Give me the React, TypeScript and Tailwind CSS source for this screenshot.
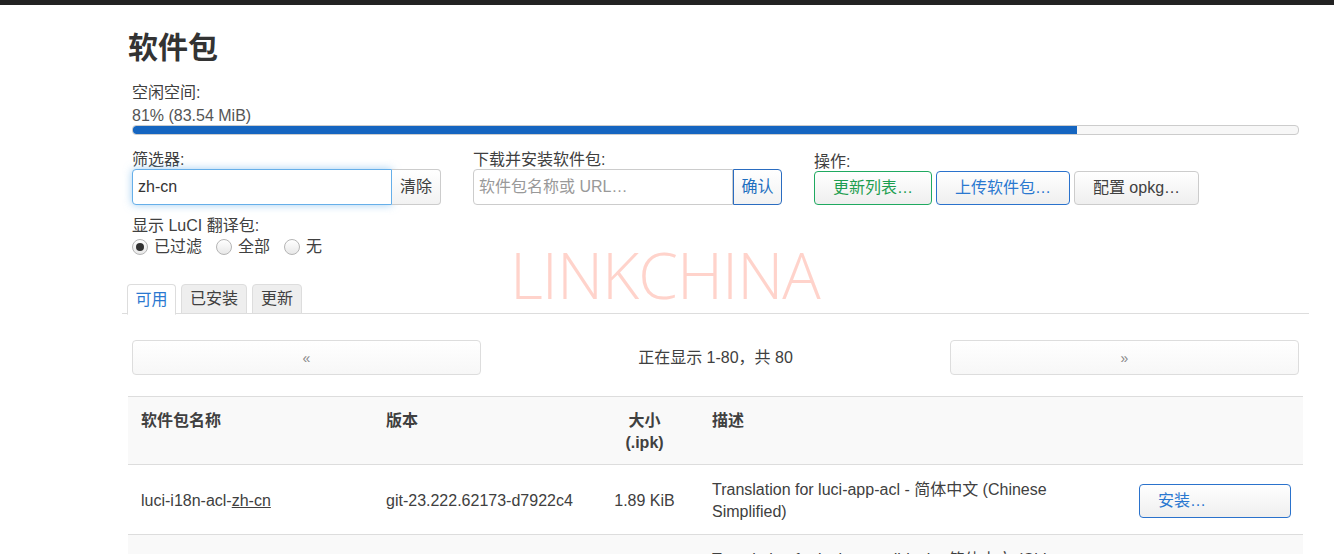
import React from "react";

const btnBase =
  "h-[34px] rounded-[4px] border bg-linear-to-b from-white to-[#efefef] text-[16px] leading-none";

function Radio({ checked, label }: { checked?: boolean; label: string }) {
  return (
    <label className="flex items-center gap-[6px]">
      <span className="w-[16px] h-[16px] rounded-full border border-[#b5b5b5] bg-linear-to-b from-white to-[#e8e8e8] flex items-center justify-center">
        {checked && <span className="w-[8px] h-[8px] rounded-full bg-[#333]" />}
      </span>
      <span>{label}</span>
    </label>
  );
}

export default function App() {
  return (
    <div className="relative h-[554px] bg-white text-[#404040] text-[16px] leading-[22px] font-['Liberation_Sans','Noto_Sans_CJK_SC',sans-serif] overflow-hidden">
      <div className="h-[5px] bg-[#222]" />
      <div className="ml-[128px] w-[1175px]">
        <h2 className="text-[30px] font-bold leading-[36px] pt-[25px] text-[#333]">软件包</h2>

        <div className="px-[4px] mt-[16px]">
          <div>空闲空间:</div>
          <div className="text-[#555] mt-[1px]">81% (83.54 MiB)</div>
          <div className="mt-[-2px] h-[10px] rounded-[4px] border border-[#ccc] bg-[#f7f7f7] overflow-hidden">
            <div className="h-full bg-[#1565c0] rounded-l-[3px]" style={{ width: "81%" }} />
          </div>
        </div>

        <div className="flex px-[4px] mt-[14px]">
          <div className="w-[341px]">
            <div className="leading-[22px]">筛选器:</div>
            <div className="flex h-[36px] mt-[-2px]">
              <div className="w-[260px] h-full border border-[#66afe9] rounded-l-[4px] shadow-[0_0_8px_rgba(102,175,233,0.6)] flex items-center px-[5px] text-[#333] bg-white">
                zh-cn
              </div>
              <div className="w-[49px] h-full border border-l-0 border-[#ccc] rounded-r-[4px] bg-linear-to-b from-white to-[#f2f2f2] flex items-center justify-center text-[#404040]">
                清除
              </div>
            </div>
          </div>
          <div className="w-[341px]">
            <div className="leading-[22px]">下载并安装软件包:</div>
            <div className="flex h-[36px] mt-[-2px]">
              <div className="w-[260px] h-full border border-[#ccc] rounded-l-[4px] flex items-center px-[5px] text-[#999] bg-white">
                软件包名称或 URL…
              </div>
              <div className="w-[49px] h-full border border-[#2a6cc0] rounded-r-[4px] bg-linear-to-b from-white to-[#f2f2f2] flex items-center justify-center text-[#1e6fc0]">
                确认
              </div>
            </div>
          </div>
          <div>
            <div className="leading-[22px] mt-[2px]">操作:</div>
            <div className="flex gap-[4px] mt-[-2px]">
              <button className={`${btnBase} w-[118px] border-[#1fa960] text-[#1e9e50]`}>更新列表…</button>
              <button className={`${btnBase} w-[134px] border-[#2a72cc] text-[#2a78d0]`}>上传软件包…</button>
              <button className={`${btnBase} w-[125px] border-[#ccc] text-[#404040]`}>配置 opkg…</button>
            </div>
          </div>
        </div>

        <div className="px-[4px] mt-[10px]">
          <div>显示 LuCI 翻译包:</div>
          <div className="flex gap-[14px] mt-[-1px]">
            <Radio checked label="已过滤" />
            <Radio label="全部" />
            <Radio label="无" />
          </div>
        </div>

        <div className="mt-[26px] -mx-[6px] flex gap-[5px] border-b border-[#ddd] pl-[5px] h-[30px]">
          <div className="w-[49px] h-[31px] border border-[#ddd] border-b-white rounded-t-[4px] bg-white flex items-center justify-center text-[#2a78d0]">
            可用
          </div>
          <div className="w-[66px] h-[30px] border border-[#ddd] rounded-t-[4px] bg-[#eee] flex items-center justify-center">
            已安装
          </div>
          <div className="w-[50px] h-[30px] border border-[#ddd] rounded-t-[4px] bg-[#eee] flex items-center justify-center">
            更新
          </div>
        </div>

        <div className="flex items-center px-[4px] mt-[26px]">
          <div className="w-[349px] h-[35px] rounded-[4px] border border-[#ddd] bg-linear-to-b from-white to-[#f7f7f7] flex items-center justify-center text-[#888] text-[14px]">
            «
          </div>
          <div className="flex-1 text-center">正在显示 1-80，共 80</div>
          <div className="w-[349px] h-[35px] rounded-[4px] border border-[#ddd] bg-linear-to-b from-white to-[#f7f7f7] flex items-center justify-center text-[#888] text-[14px]">
            »
          </div>
        </div>

        <table className="mt-[21px] w-full border-collapse table-fixed">
          <colgroup>
            <col className="w-[245px]" />
            <col className="w-[217px]" />
            <col className="w-[109px]" />
            <col className="w-[427px]" />
            <col className="w-[177px]" />
          </colgroup>
          <thead>
            <tr className="bg-[#f9f9f9] border-t border-[#ddd] align-top">
              <th className="text-left font-bold px-[13px] pt-[13px] pb-[9px] h-[68px]">软件包名称</th>
              <th className="text-left font-bold px-[13px] pt-[13px] pb-[9px]">版本</th>
              <th className="text-center font-bold px-[13px] pt-[13px] pb-[9px]">
                大小
                <br />
                (.ipk)
              </th>
              <th className="text-left font-bold px-[13px] pt-[13px] pb-[9px]">描述</th>
              <th className="px-[12px] pt-[13px] pb-[9px]" />
            </tr>
          </thead>
          <tbody>
            <tr className="border-t border-[#ddd] bg-white">
              <td className="px-[13px] pt-[13px] pb-[11px] h-[70px]">
                luci-i18n-acl-<span className="underline">zh-cn</span>
              </td>
              <td className="px-[13px] pt-[13px] pb-[11px] whitespace-nowrap">git-23.222.62173-d7922c4</td>
              <td className="px-[13px] pt-[13px] pb-[11px] text-center whitespace-nowrap">1.89 KiB</td>
              <td className="px-[13px] pt-[13px] pb-[11px]">Translation for luci-app-acl - 简体中文 (Chinese Simplified)</td>
              <td className="pl-[13px] pr-[12px] pt-[13px] pb-[11px]">
                <button className={`${btnBase} w-[152px] border-[#2a72cc] text-[#2a78d0] text-left pl-[18px]`}>
                  安装…
                </button>
              </td>
            </tr>
            <tr className="border-t border-[#ddd] bg-[#f9f9f9]">
              <td className="px-[13px] pt-[13px] pb-[11px] h-[70px]">
                luci-i18n-adblock-<span className="underline">zh-cn</span>
              </td>
              <td className="px-[13px] pt-[13px] pb-[11px] whitespace-nowrap">git-23.222.62173-d7922c4</td>
              <td className="px-[13px] pt-[13px] pb-[11px] text-center whitespace-nowrap">3.12 KiB</td>
              <td className="px-[13px] pt-[13px] pb-[11px]">Translation for luci-app-adblock - 简体中文 (Chinese Simplified)</td>
              <td className="pl-[13px] pr-[12px] pt-[13px] pb-[11px]">
                <button className={`${btnBase} w-[152px] border-[#2a72cc] text-[#2a78d0] text-left pl-[18px]`}>
                  安装…
                </button>
              </td>
            </tr>
          </tbody>
        </table>
      </div>

      <div className="absolute left-[510px] top-[237px] text-[64px] leading-[76px] text-[#ffd3cb] font-['Open_Sans',sans-serif] font-light pointer-events-none tracking-[-1px]">
        LINKCHINA
      </div>
    </div>
  );
}
